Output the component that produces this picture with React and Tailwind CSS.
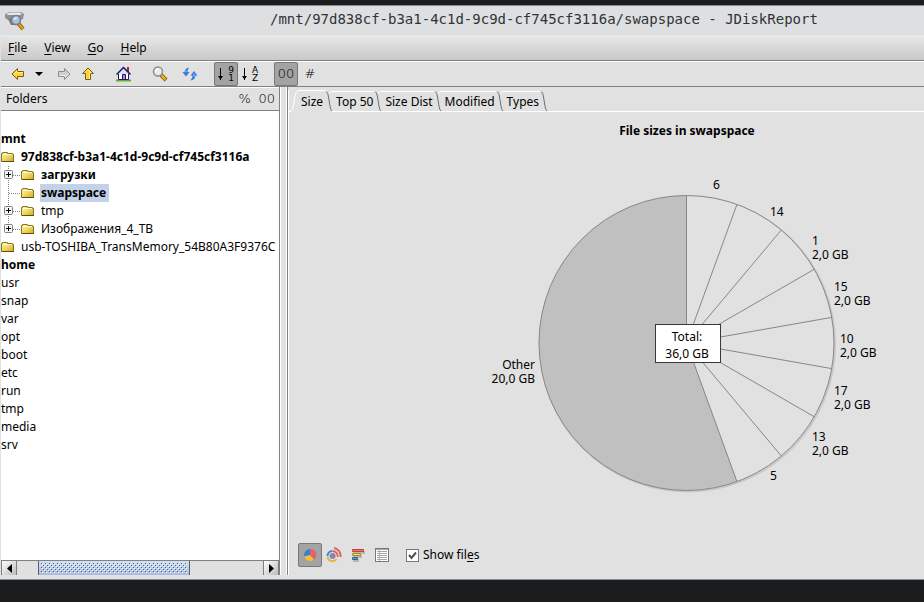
import React from "react";

const line = "#808080";

function AppIcon() {
  return (
    <svg width="22" height="20" viewBox="0 0 22 20" aria-hidden="true">
      <path d="M1 3l5-2h11l3 2-1 5-3 1H4L1 7z" fill="#8f8f8f" />
      <path d="M2 3l5-1.500h9L18 3l-2 1H4z" fill="#e8e8e8" />
      <path d="M4 8l3 6h3V8z" fill="#777" />
      <path d="M14 12l5 6" stroke="#8a5a10" strokeWidth="4" />
      <path d="M14 12l5 6" stroke="#e39a1c" strokeWidth="2.500" />
      <circle cx="12" cy="9" r="4.500" fill="#a8c0dc" stroke="#777c86" strokeWidth="1.500" />
      <path d="M10 8.500q1-2 3-1.500" stroke="#e8f1fb" strokeWidth="1.500" fill="none" />
    </svg>
  );
}

function Arrow({ kind }) {
  const fill = kind === "forward" ? "#cfcfcf" : "#ffd42a";
  const stroke = kind === "forward" ? "#8c8c8c" : "#7a5a14";
  const turn = { back: 0, up: 90, forward: 180 }[kind];
  return (
    <svg width="14" height="14" viewBox="0 0 14 14" aria-hidden="true">
      <g transform={`rotate(${turn} 7 7)`}>
        <path d="M1 7L6.500 1.500V4.500H12.500V9.500H6.500V12.500Z" fill={fill} stroke={stroke} strokeLinejoin="round" />
        <path d="M3 7l3-3v1.500h6" fill="none" stroke="#fff" opacity=".6" />
      </g>
    </svg>
  );
}

function HomeIcon() {
  return (
    <svg width="16" height="16" viewBox="0 0 16 16" aria-hidden="true">
      <path d="M0 14.500h15" stroke="#5fae2c" strokeWidth="2" />
      <path d="M2.500 7.500h10v6h-10z" fill="#fff" stroke="#16166e" />
      <path d="M11 1h2v5h-2z" fill="#b02020" />
      <path d="M1.500 8L7.500 2l6 6z" fill="#d4e0f5" />
      <path d="M.5 8.500L7.500 1.500l7 7" fill="none" stroke="#16166e" strokeWidth="1.500" />
      <path d="M6.500 8.500h3v5h-3z" fill="#d884a0" stroke="#16166e" />
    </svg>
  );
}

function SearchIcon() {
  return (
    <svg width="16" height="16" viewBox="0 0 16 16" aria-hidden="true">
      <path d="M9 9l5 5" stroke="#80500a" strokeWidth="4" />
      <path d="M9.500 9.500l4 4" stroke="#f2ae1c" strokeWidth="2.500" />
      <circle cx="6" cy="5.500" r="4.500" fill="#e6eceb" stroke="#8f8f83" strokeWidth="1.500" />
      <path d="M3.500 5.500q.5-2 2.500-2.500" stroke="#fff" strokeWidth="1.500" fill="none" />
    </svg>
  );
}

function RefreshIcon() {
  return (
    <svg width="16" height="14" viewBox="0 0 16 14" aria-hidden="true">
      <path d="M7 .5Q3 1 2.500 5H.5L4 9.500 7.500 5H5.500Q5.500 3 7 .5z" fill="#2f7fd6" />
      <path d="M8.500 13.500q4.500-.5 5-5h2L12 4 8.500 8.500h2Q10.500 11 8.500 13.500z" fill="#2f7fd6" />
      <path d="M3.500 5.500l1-2.500M12 6v4" stroke="#86bdf2" />
    </svg>
  );
}

function SortIcon({ top, bottom }) {
  return (
    <span className="flex items-center gap-1" aria-hidden="true">
      <svg width="6" height="12" viewBox="0 0 6 12">
        <path d="M2 0h1v12H2zM0 8h5L2.500 11.500z" fill="#000" />
      </svg>
      <span className="flex flex-col font-['DejaVu_Sans',sans-serif] text-[9px] leading-2">
        <span>{top}</span>
        <span>{bottom}</span>
      </span>
    </span>
  );
}

function ToolButton({ label, pressed, children }) {
  return (
    <button
      aria-label={label}
      aria-pressed={pressed}
      className={
        pressed
          ? "flex size-6 shrink-0 items-center justify-center rounded-xs border border-[#787878] bg-[#a3a3a3]"
          : "flex size-6 shrink-0 items-center justify-center"
      }
    >
      {children}
    </button>
  );
}

const digits = "font-['DejaVu_Sans',sans-serif] text-[13px] font-extralight leading-4";

function Toolbar() {
  return (
    <div role="toolbar" className="flex h-[25px] shrink-0 items-center border-t border-white pl-[5px]">
      <ToolButton label="Back"><Arrow kind="back" /></ToolButton>
      <button aria-label="History" className="flex h-6 w-[22px] items-center justify-center pr-1">
        <svg width="8" height="4" viewBox="0 0 8 4"><path d="M0 0h8L4 4z" /></svg>
      </button>
      <ToolButton label="Forward"><Arrow kind="forward" /></ToolButton>
      <ToolButton label="Up"><Arrow kind="up" /></ToolButton>
      <div className="flex pl-3"><ToolButton label="Home"><HomeIcon /></ToolButton></div>
      <div className="flex pl-3"><ToolButton label="Find"><SearchIcon /></ToolButton></div>
      <div className="flex pl-[6px]"><ToolButton label="Refresh"><RefreshIcon /></ToolButton></div>
      <div className="flex pl-3">
        <ToolButton label="Sort by size" pressed><SortIcon top="9" bottom="1" /></ToolButton>
        <ToolButton label="Sort by name"><SortIcon top="A" bottom="Z" /></ToolButton>
      </div>
      <div className="flex pl-3">
        <ToolButton label="Show sizes" pressed><span className={digits}>00</span></ToolButton>
        <ToolButton label="Show counts"><span className={digits}>#</span></ToolButton>
      </div>
    </div>
  );
}

function Folder() {
  return (
    <svg className="shrink-0" width="13" height="12" viewBox="0 0 13 12" aria-hidden="true">
      <defs>
        <linearGradient id="folder" x1="0" y1="0" x2="1" y2="1">
          <stop offset="0" stopColor="#fff6b0" />
          <stop offset=".5" stopColor="#f0d863" />
          <stop offset="1" stopColor="#d2a81c" />
        </linearGradient>
      </defs>
      <path d="M.5 10.500V2.500h1v-1h5v1h5v1h1v7z" fill="url(#folder)" stroke="#85781a" />
      <path d="M1 10.500h12" stroke="#5e500c" />
      <path d="M2 3.500h9" stroke="#fffbd8" />
    </svg>
  );
}

function Branch({ expandable, last }) {
  return (
    <svg className="shrink-0" width="20" height="18" viewBox="0 0 20 18" aria-hidden="true">
      <path d={last ? "M7.500 0v9" : "M7.500 0v18"} stroke={line} strokeDasharray="1 1" />
      <path d="M8 9.500h12" stroke={line} strokeDasharray="1 1" />
      {expandable && (
        <>
          <rect x="3.500" y="4.500" width="8" height="8" rx="1" fill="#f4f4f4" stroke="#808080" />
          <path d="M5 8.500h5M7.500 6v5" stroke="#000" />
        </>
      )}
    </svg>
  );
}

const tree = [
  { name: "mnt", bold: true },
  { name: "97d838cf-b3a1-4c1d-9c9d-cf745cf3116a", bold: true, level: 1 },
  { name: "загрузки", bold: true, level: 2, expandable: true },
  { name: "swapspace", bold: true, level: 2, selected: true },
  { name: "tmp", level: 2, expandable: true },
  { name: "Изображения_4_ТВ", level: 2, expandable: true, last: true },
  { name: "usb-TOSHIBA_TransMemory_54B80A3F9376C", level: 1 },
  { name: "home", bold: true },
  { name: "usr" },
  { name: "snap" },
  { name: "var" },
  { name: "opt" },
  { name: "boot" },
  { name: "etc" },
  { name: "run" },
  { name: "tmp" },
  { name: "media" },
  { name: "srv" },
];

function TreeRow({ node }) {
  return (
    <li role="treeitem" aria-selected={!!node.selected} className="flex h-[18px] items-center whitespace-nowrap">
      {node.level === 2 && <Branch expandable={node.expandable} last={node.last} />}
      {node.level && <span className="flex w-[19px] shrink-0"><Folder /></span>}
      <span
        className={
          (node.bold ? "font-bold " : "") +
          (node.selected ? "bg-[#c3d2e8] pr-[3px] " : "") +
          (node.level ? "pl-px leading-[18px]" : "leading-[18px]")
        }
      >
        {node.name}
      </span>
    </li>
  );
}

function ScrollButton({ label, path }) {
  return (
    <button aria-label={label} className="flex w-4 shrink-0 items-center justify-center border-r border-l border-[#808080] bg-linear-to-br from-white to-[#bcbcbc]">
      <svg width="5" height="9" viewBox="0 0 5 9"><path d={path} /></svg>
    </button>
  );
}

function FolderPane() {
  return (
    <section className="flex w-[279px] shrink-0 flex-col border-r border-[#808080]">
      <header className="flex h-[23px] shrink-0 items-center border-t border-white pr-1 pl-[5px]">
        <span className="flex-1">Folders</span>
        <button aria-label="Show percent" className={digits + " w-5 text-left"}>%</button>
        <button aria-label="Show size" className={digits}>00</button>
      </header>
      <ul role="tree" className="min-h-0 flex-1 overflow-hidden border-t border-[#808080] bg-white pt-[19px]">
        {tree.map((node, i) => <TreeRow key={i} node={node} />)}
      </ul>
      <div className="flex h-[15px] shrink-0 border-t border-[#808080] bg-[#e0e0e0]">
        <ScrollButton label="Scroll left" path="M5 0v9L0 4.500z" />
        <span className="w-[21px] shrink-0" />
        <div className="flex w-[152px] shrink-0 border-r border-l border-[#606060] bg-linear-to-b from-[#d5e1f2] to-[#a9bddb] p-[2px]">
          <svg className="size-full" aria-hidden="true">
            <defs>
              <pattern id="grip" width="4" height="4" patternUnits="userSpaceOnUse">
                <path d="M0 0h1v1H0zM2 2h1v1H2z" fill="#45618f" />
                <path d="M1 1h1v1H1zM3 3h1v1H3z" fill="#fff" />
              </pattern>
            </defs>
            <rect width="100%" height="100%" fill="url(#grip)" />
          </svg>
        </div>
        <span className="flex-1" />
        <ScrollButton label="Scroll right" path="M0 0v9l5-4.500z" />
      </div>
    </section>
  );
}

const tabs = ["Size", "Top 50", "Size Dist", "Modified", "Types"];

function TabEdge({ first, last }) {
  return (
    <svg className="shrink-0" width="12" height="22" viewBox="0 0 12 22" aria-hidden="true">
      <path d={first ? "M0 .5h2" : "M0 1.500h2"} stroke="#fff" />
      <path d="M2 1.500Q4 2 4.500 7L6 16Q6.500 20 8 21" fill="none" stroke="#6e6e6e" />
      {!last && <path d="M5.500 4Q6 1.500 8 1.500h4" fill="none" stroke="#fff" />}
      <path d={first ? "M8 21.500h4" : "M0 21.500h12"} stroke="#fff" />
    </svg>
  );
}

function Tabs() {
  return (
    <div role="tablist" className="flex h-[22px] shrink-0">
      <svg className="shrink-0" width="12" height="22" viewBox="0 0 12 22" aria-hidden="true">
        <path d="M0 21.500h2Q4 20 4.500 15L6 6Q7 .5 9 .5h3" fill="none" stroke="#fff" />
      </svg>
      {tabs.map((tab, i) => (
        <React.Fragment key={tab}>
          <button
            role="tab"
            aria-selected={i === 0}
            className={
              i === 0
                ? "shrink-0 border-t border-white pr-px whitespace-nowrap"
                : "mt-px shrink-0 border-t border-b border-white whitespace-nowrap"
            }
          >
            {tab}
          </button>
          <TabEdge first={i === 0} last={i === tabs.length - 1} />
        </React.Fragment>
      ))}
      <span className="flex-1 border-b border-white" />
    </div>
  );
}

const slices = [
  { name: "6", x: 223, y: 44 },
  { name: "14", x: 280, y: 71 },
  { name: "1", size: "2,0 GB", x: 322, y: 100 },
  { name: "15", size: "2,0 GB", x: 344, y: 146 },
  { name: "10", size: "2,0 GB", x: 350, y: 198 },
  { name: "17", size: "2,0 GB", x: 344, y: 250 },
  { name: "13", size: "2,0 GB", x: 322, y: 296 },
  { name: "5", x: 280, y: 335 },
  { name: "Other", size: "20,0 GB", x: 45, y: 224, anchor: "end" },
];

const center = { x: 196.5, y: 198 };
const radius = 147.5;

function rim(degrees) {
  const a = (degrees * Math.PI) / 180;
  return { x: center.x + radius * Math.sin(a), y: center.y - radius * Math.cos(a) };
}

function PieChart() {
  const end = rim(160);
  return (
    <svg width="394" height="380" viewBox="0 0 394 380" className="shrink-0 text-[12px]" role="img" aria-label="File sizes">
      <circle cx={center.x + 1} cy={center.y + 1} r={radius} fill="none" stroke="#c8c8c8" strokeWidth="2" />
      <circle cx={center.x} cy={center.y} r={radius} fill="#e1e1e1" />
      <path
        d={`M${center.x} ${center.y}L${end.x} ${end.y}A${radius} ${radius} 0 1 1 ${center.x} ${center.y - radius}Z`}
        fill="#c0c0c0"
      />
      <g stroke="#878787" fill="none">
        {[0, 20, 40, 60, 80, 100, 120, 140, 160].map((d) => {
          const p = rim(d);
          return <path key={d} d={`M${center.x} ${center.y}L${p.x} ${p.y}`} />;
        })}
        <circle cx={center.x} cy={center.y} r={radius} />
      </g>
      {slices.map((s) => (
        <text key={s.name} x={s.x} y={s.y} textAnchor={s.anchor || "start"}>
          {s.name}
          {s.size && <tspan x={s.x} dy="14">{s.size}</tspan>}
        </text>
      ))}
      <rect x="165.500" y="179.500" width="65" height="38" fill="#fff" stroke="#383838" />
      <text x="197" y="196" textAnchor="middle">
        Total:
        <tspan x="197" dy="17">36,0 GB</tspan>
      </text>
    </svg>
  );
}

function PieIcon() {
  return (
    <svg width="14" height="14" viewBox="0 0 14 14" aria-hidden="true">
      <circle cx="7" cy="7" r="6" fill="#3d7fcb" />
      <path d="M7 7V1a6 6 0 0 1 4 10.500z" fill="#e8606a" />
      <path d="M7 7l4 4.500A6 6 0 0 1 1.200 8.500z" fill="#f6be35" />
    </svg>
  );
}

function RingIcon() {
  return (
    <svg width="16" height="16" viewBox="0 0 16 16" fill="none" aria-hidden="true">
      <circle cx="6.500" cy="9" r="3" fill="#5d95d6" />
      <path d="M6.500 9V6a3 3 0 0 1 2.500 4.500z" fill="#e8606a" />
      <path d="M1.500 9a5 5 0 0 1 5-5" stroke="#3d7fcb" strokeWidth="2" />
      <path d="M1.500 10a5 5 0 0 0 9 2" stroke="#f0b23c" strokeWidth="2" />
      <path d="M7 4a5 5 0 0 1 4.500 6M8 1a8 8 0 0 1 6.500 9" stroke="#de6468" strokeWidth="2" />
    </svg>
  );
}

function BarsIcon() {
  return (
    <svg width="14" height="14" viewBox="0 0 14 14" aria-hidden="true">
      <path d="M2 3h12v3H2zM2 7h9v3H2zM2 11h6v3H2z" fill="#b5b5b5" />
      <path d="M1.500 1.500h11v2h-11z" fill="#ec7c7c" stroke="#b84343" />
      <path d="M1.500 5.500h8v2h-8z" fill="#f9d65c" stroke="#b28720" />
      <path d="M1.500 9.500h5v2h-5z" fill="#5c9cc2" stroke="#30698d" />
    </svg>
  );
}

function TableIcon() {
  return (
    <svg width="14" height="14" viewBox="0 0 14 14" aria-hidden="true">
      <rect x=".5" y=".5" width="13" height="13" fill="#fff" stroke="#777" />
      <path d="M1 1.500h12" stroke="#aaa" />
      <path d="M4.500 1v12" stroke="#bbb" />
      <path d="M2 3.500h10M2 5.500h10M2 7.500h10M2 9.500h10M2 11.500h10" stroke="#a5a5a5" />
    </svg>
  );
}

function ChartPane() {
  return (
    <section className="flex min-w-0 flex-1 flex-col overflow-hidden border-l border-[#808080] pt-[3px]">
      <div className="flex min-h-0 flex-1 flex-col border-l border-white">
        <Tabs />
        <div className="flex min-h-0 flex-1 pl-[201px]">
          <div className="flex w-[394px] shrink-0 flex-col pt-[10px]">
            <h2 className="pb-[5px] text-center leading-[18px] font-bold">File sizes in swapspace</h2>
            <PieChart />
          </div>
        </div>
        <div className="flex shrink-0 items-center pb-2 pl-[9px]">
          <ToolButton label="Pie chart" pressed><PieIcon /></ToolButton>
          <ToolButton label="Ring chart"><RingIcon /></ToolButton>
          <ToolButton label="Bar chart"><BarsIcon /></ToolButton>
          <ToolButton label="Table"><TableIcon /></ToolButton>
          <label className="flex items-center gap-1 pl-3 leading-[18px]">
            <span className="grid">
              <input
                type="checkbox"
                defaultChecked
                className="col-start-1 row-start-1 size-[13px] appearance-none border border-[#777777] bg-white"
              />
              <svg className="pointer-events-none col-start-1 row-start-1" width="13" height="13" viewBox="0 0 13 13" aria-hidden="true">
                <path d="M3 6l2.500 3L10 3.500" fill="none" stroke="#505050" strokeWidth="2" />
              </svg>
            </span>
            <span>Show fil<u className="underline-offset-2">e</u>s</span>
          </label>
        </div>
      </div>
    </section>
  );
}

const menus = ["File", "View", "Go", "Help"];

export default function App() {
  return (
    <div className="flex h-screen flex-col bg-[#1b1c1d] pt-[5px] pb-[22px] font-['Noto_Sans',sans-serif] text-[12px] text-black">
      <div className="flex min-h-0 flex-1 flex-col border-t border-b border-[#8a8a8a] bg-[#e1e1e1]">
        <header className="flex h-[29px] shrink-0 items-center overflow-hidden bg-[#dedfe1] pl-1">
          <AppIcon />
          <h1 className="flex-1 pb-[2px] pl-[244px] font-['DejaVu_Sans_Mono',monospace] text-[14px] whitespace-nowrap text-[#2f3336]">
            /mnt/97d838cf-b3a1-4c1d-9c9d-cf745cf3116a/swapspace - JDiskReport
          </h1>
        </header>
        <div className="flex min-h-0 flex-1 flex-col pb-1 pl-px">
          <nav className="flex h-[26px] shrink-0 items-center gap-[17px] border-b border-[#808080] bg-linear-to-b from-[#e8e8e8] to-[#c9c9c9] pl-[7px]">
            {menus.map((m) => (
              <button key={m}><u className="underline-offset-2">{m[0]}</u>{m.slice(1)}</button>
            ))}
          </nav>
          <Toolbar />
          <div className="flex min-h-0 flex-1 border-t border-[#808080]">
            <FolderPane />
            <div role="separator" className="w-[7px] shrink-0 border-r border-l border-white bg-[#e1e1e1]" />
            <ChartPane />
          </div>
        </div>
      </div>
    </div>
  );
}
